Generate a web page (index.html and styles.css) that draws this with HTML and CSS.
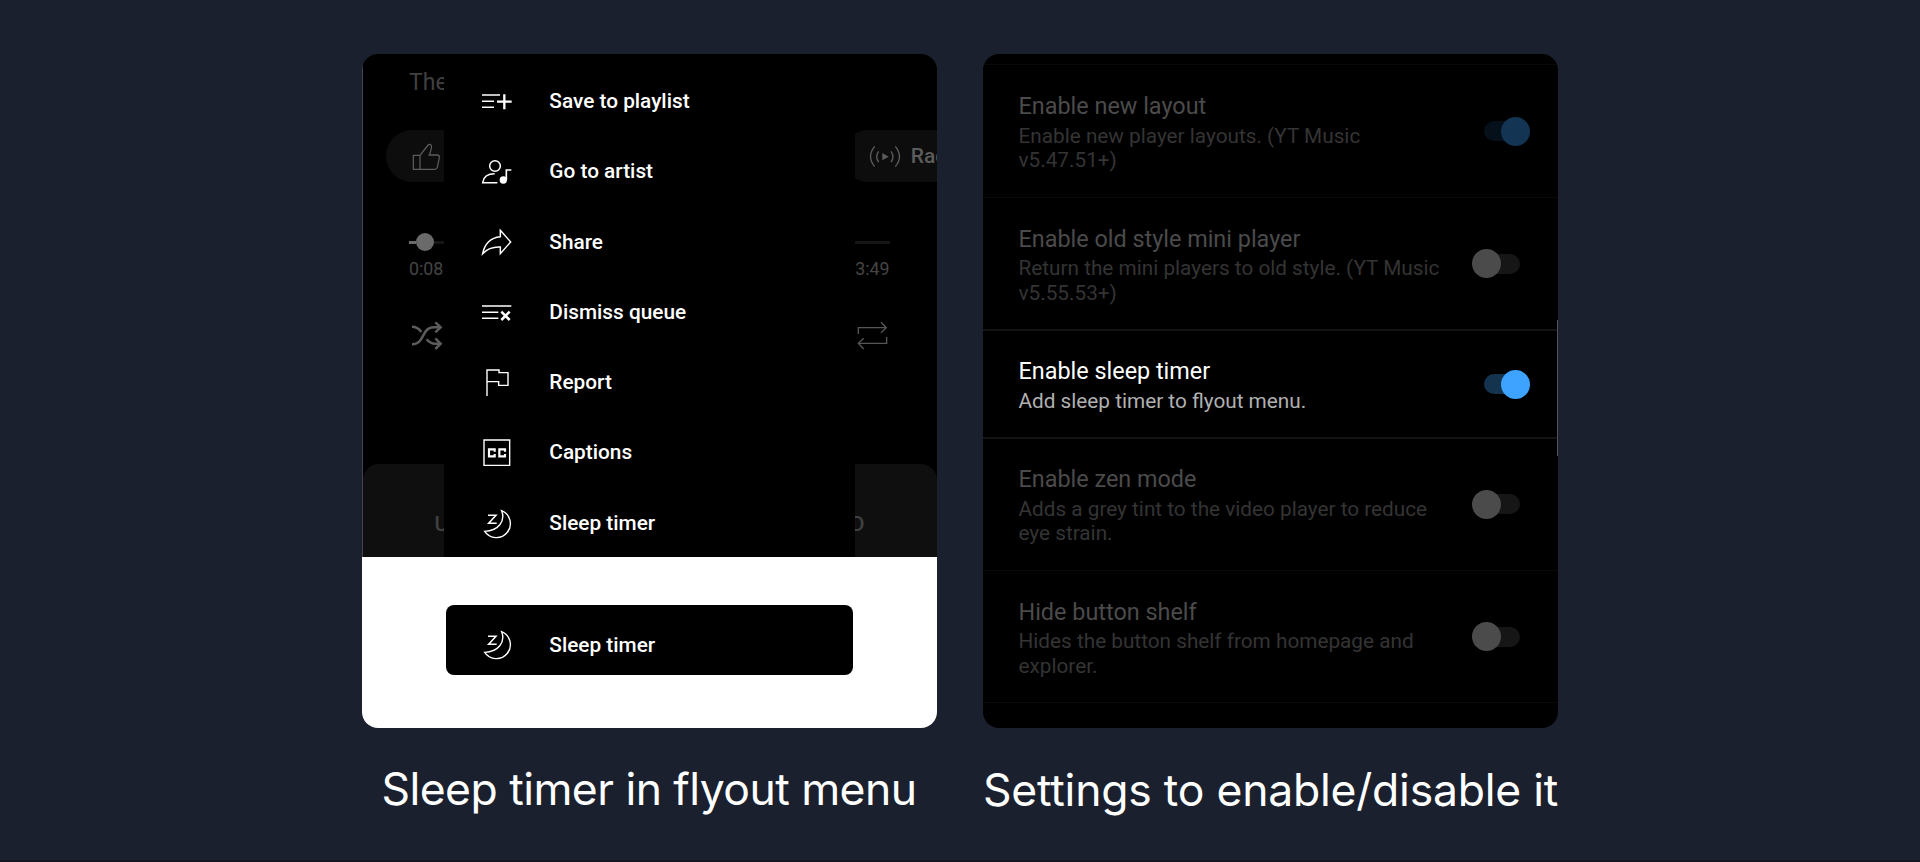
FILE: index.html
```html
<!DOCTYPE html>
<html lang="en">
<head>
<meta charset="utf-8">
<title>Sleep timer</title>
<link rel="stylesheet" href="styles.css">
</head>
<body>
<svg class="sprite" aria-hidden="true">
  <symbol id="moon" viewBox="390 648 100 100">
    <path d="M414 673H438L416 697H440" stroke-width="4.6"/>
    <path d="M455 659A42 42 0 1 1 404 721C445 720 467 690 455 659Z" stroke-width="4.2"/>
  </symbol>
</svg>
<main class="showcase">
  <figure class="feature">
    <div class="card card-menu">
      <div class="player">
        <div class="song">The</div>
        <div class="chips">
          <div class="chip chip-like">
            <svg class="icon" viewBox="180 284 100 100"><path stroke-width="3.8" d="M190 330H210V372H190ZM210 330L232 302Q238 294 244 300Q247 305 238 329H262Q269 330 268 337L262 366Q260 372 254 372H210"/></svg>
          </div>
          <div class="chip chip-radio">
            <svg class="icon" viewBox="504 283 100 100"><path stroke-width="4" d="M536 317Q524 333 536 349M573 317Q585 333 573 349M524 302Q499 333 524 363M586 302Q611 333 586 363"/><path class="solid" d="M547 322L566 333L547 344Z"/></svg>
            <span>Radio</span>
          </div>
        </div>
        <div class="seek"><span class="seek-done"></span><span class="seek-knob"></span><span class="seek-rest"></span></div>
        <div class="times"><span>0:08</span><span>3:49</span></div>
        <div class="controls">
          <svg class="icon shuffle" viewBox="180 89 100 100"><path stroke-width="7.5" d="M186 112C199 112 208 119 214 128M186 165C226 165 212 114 252 114H271M230 150C237 158 245 163 256 163H271M256 99L272 114L256 129M256 147L272 163L256 179"/></svg>
          <svg class="icon" viewBox="468 59 100 100"><path stroke-width="4" d="M475 104V85H558M543 69L559 85L543 100M560 113V132H476M491 117L475 132L491 149"/></svg>
        </div>
        <div class="tabs"><span>UP NEXT</span><span>RELATED</span></div>
      </div>
      <ul class="flyout">
        <li class="item"><svg class="icon" viewBox="390 117 100 100"><path stroke-width="4.6" d="M396 147H450M396 166H432M396 184H432"/><path stroke-width="7" d="M441 167H485M463 145V190"/></svg>Save to playlist</li>
        <li class="item"><svg class="icon" viewBox="390 328 100 100"><circle cx="435" cy="361" r="16" stroke-width="4.6"/><path stroke-width="4.6" d="M442 411H398C400 394 412 384 434 384"/><circle class="solid" cx="460" cy="403" r="11"/><path stroke-width="5" d="M469 403V373H484"/></svg>Go to artist</li>
        <li class="item"><svg class="icon" viewBox="390 539 100 100"><path stroke-width="4.4" d="M451 555L482 590L451 625V605C429 604 412 610 398 625C403 598 421 576 451 574Z"/></svg>Share</li>
        <li class="item"><svg class="icon" viewBox="390 15 100 100"><path stroke-width="4.6" d="M396 45H484M396 64H445M396 82H445"/><path stroke-width="7.5" d="M454 62L479 87M479 62L454 87"/></svg>Dismiss queue</li>
        <li class="item"><svg class="icon" viewBox="390 226 100 100"><path stroke-width="4.2" d="M411 316V238H447V246H474V284H446V273H411"/></svg>Report</li>
        <li class="item"><svg class="icon" viewBox="390 437 100 100"><path stroke-width="4.2" d="M402 449H479V525H402Z"/><path stroke-width="6.5" d="M434 484V477H417V498H434V491M465 484V477H448V498H465V491"/></svg>Captions</li>
        <li class="item"><svg class="icon"><use href="#moon"/></svg>Sleep timer</li>
      </ul>
      <div class="callout-area">
        <div class="callout item"><svg class="icon"><use href="#moon"/></svg>Sleep timer</div>
      </div>
    </div>
    <figcaption class="caption caption-menu">Sleep timer in flyout menu</figcaption>
  </figure>
  <figure class="feature">
    <div class="card card-settings">
      <div class="setting">
        <div class="copy"><div class="name">Enable new layout</div><div class="desc">Enable new player layouts. (YT Music<br>v5.47.51+)</div></div>
        <span class="toggle on"></span>
      </div>
      <div class="setting">
        <div class="copy"><div class="name">Enable old style mini player</div><div class="desc">Return the mini players to old style. (YT Music<br>v5.55.53+)</div></div>
        <span class="toggle"></span>
      </div>
      <div class="setting active">
        <div class="copy"><div class="name">Enable sleep timer</div><div class="desc">Add sleep timer to flyout menu.</div></div>
        <span class="toggle on"></span>
      </div>
      <div class="setting">
        <div class="copy"><div class="name">Enable zen mode</div><div class="desc">Adds a grey tint to the video player to reduce<br>eye strain.</div></div>
        <span class="toggle"></span>
      </div>
      <div class="setting last">
        <div class="copy"><div class="name">Hide button shelf</div><div class="desc">Hides the button shelf from homepage and<br>explorer.</div></div>
        <span class="toggle"></span>
      </div>
      <span class="scrollbar"></span>
    </div>
    <figcaption class="caption caption-settings">Settings to enable/disable it</figcaption>
  </figure>
</main>
</body>
</html>
```
FILE: styles.css
```css
* { box-sizing: border-box; }
body {
  margin: 0;
  height: 862px;
  overflow: hidden;
  background: #1b202e;
  border-bottom: 2px solid #151823;
  font-family: Roboto, "Liberation Sans", sans-serif;
  color: #fff;
}
.sprite { display: block; width: 0; height: 0; fill: none; stroke: currentColor; }
.showcase { display: flex; gap: 46.5px; padding: 54.3px 0 0 361.5px; }
.feature { flex: none; margin: 0; width: 575px; }
.card { position: relative; height: 674px; border-radius: 16px; overflow: hidden; background: #000; }
.icon {
  flex: none;
  width: 33.33px;
  height: 33.33px;
  fill: none;
  stroke: currentColor;
}
.solid { fill: currentColor; stroke: none; }

/* Dimmed player behind the flyout */
.player { height: 503px; border-left: 1px solid #42454d; color: #404040; }
.song { height: 76px; padding: 15.4px 0 0 46.5px; font-size: 23px; line-height: 26px; }
.chips { display: flex; justify-content: space-between; height: 52px; padding-left: 23px; color: #5c5c5c; }
.chip { display: flex; align-items: center; height: 52px; background: #0d0d0d; }
.chip-like { width: 110px; padding-left: 24px; border-radius: 26px 0 0 26px; }
.chip-radio {
  width: 95px;
  padding-left: 26px;
  gap: 10px;
  border-radius: 26px 0 0 26px;
  font-size: 21px;
  font-weight: 500;
}
.seek { display: flex; align-items: center; height: 18px; margin: 51px 47px 0 46px; }
.seek-done { width: 7px; height: 3px; background: #6a6a6a; }
.seek-knob { width: 18px; height: 18px; border-radius: 50%; background: #6a6a6a; }
.seek-rest { flex: 1; height: 3px; background: #161616; }
.times { display: flex; justify-content: space-between; margin: 6.4px 47px 0 46.5px; font-size: 17.8px; line-height: 22px; color: #454545; }
.controls { display: flex; justify-content: space-between; margin: 39.5px 47px 0 47px; color: #555; }
.controls .shuffle { color: #5c5c5c; }
.tabs {
  display: flex;
  justify-content: space-between;
  height: 94px;
  margin-top: 111.5px;
  padding: 48px 72px 0 72px;
  border-radius: 16px 16px 0 0;
  background: #0f0f0f;
  font-size: 21px;
  font-weight: 500;
  line-height: 24px;
}

.flyout {
  position: absolute;
  left: 82px;
  top: 0;
  width: 411px;
  height: 503px;
  margin: 0;
  padding: 11.9px 0 0;
  overflow: hidden;
  background: #000;
  list-style: none;
}
.item {
  display: flex;
  align-items: center;
  gap: 36.5px;
  height: 70.33px;
  padding-left: 36px;
  font-size: 20.8px;
  font-weight: 500;
  line-height: 25px;
  white-space: nowrap;
}
.callout-area { height: 171px; padding: 48px 0 0 84px; background: #fff; }
.callout { width: 407px; height: 69.5px; padding: 10px 0 0 34px; border-radius: 8px; background: #000; }

/* Settings list */
.card-settings { padding-top: 10px; }
.setting {
  display: flex;
  justify-content: space-between;
  height: 132.5px;
  padding: 26.9px 26.5px 0 35.5px;
  border-top: 1px solid #0a0a0a;
  white-space: nowrap;
}
.name { font-size: 23.4px; line-height: 28px; color: #4b4b4b; }
.desc { margin-top: 3.7px; font-size: 20.75px; line-height: 24.6px; color: #343434; }
.setting.active { height: 108px; border-top: 2px solid #131313; padding-top: 25.9px; }
.setting.active + .setting { border-top: 2px solid #131313; padding-top: 25.9px; }
.active .name { color: #fff; }
.active .desc { color: #b0b0b0; }
.setting.last { height: 133.5px; border-bottom: 1px solid #0a0a0a; }

.toggle { position: relative; width: 36px; height: 20px; margin: 29px 12px 0 0; border-radius: 10px; background: #161616; }
.active .toggle { margin-top: 17px; }
.toggle::after {
  content: "";
  position: absolute;
  left: -12px;
  top: -4.7px;
  width: 29.4px;
  height: 29.4px;
  border-radius: 50%;
  background: #4b4b4b;
}
.toggle.on { background: #05101a; }
.toggle.on::after { left: 17px; background: #133453; }
.active .toggle.on { background: #14334f; }
.active .toggle.on::after { background: #3ea2ff; }
.scrollbar { position: absolute; right: 0; top: 266px; width: 1px; height: 136px; background: #50535a; }

.caption { font-family: Inter, "Open Sans", sans-serif; font-size: 44.5px; line-height: 54px; text-align: center; white-space: nowrap; }
.caption-menu { margin-top: 33.7px; letter-spacing: -0.55px; }
.caption-settings { margin-top: 34.7px; letter-spacing: -0.23px; }
```
